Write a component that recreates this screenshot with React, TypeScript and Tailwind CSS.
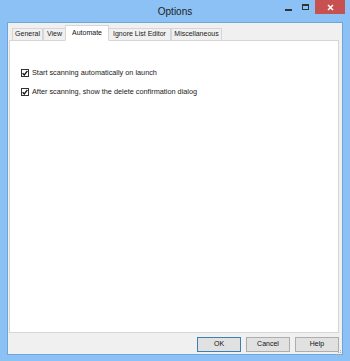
import React from "react";

const font = { fontFamily: '"Liberation Sans", Arial, sans-serif' };

function Check({ label }: { label: string }) {
  return (
    <div className="flex items-center gap-[3px] h-[9px]">
      <div className="w-[8px] h-[8px] border border-[#333] bg-white flex items-center justify-center">
        <svg width="6" height="6" viewBox="0 0 6 6">
          <path d="M0.6 3.2 L2.3 4.9 L5.4 0.9" fill="none" stroke="#111" strokeWidth="1.3" />
        </svg>
      </div>
      <span className="text-[7.3px] text-[#1a1a1a] leading-none">{label}</span>
    </div>
  );
}

function Tab({ label, active, w }: { label: string; active?: boolean; w: string }) {
  if (active) {
    return (
      <div
        className={`${w} h-[16px] -mb-px bg-white border border-[#d6d6d6] border-b-white flex items-center justify-center text-[7px] text-[#111] z-10 -mx-px`}
      >
        {label}
      </div>
    );
  }
  return (
    <div
      className={`${w} h-[12px] bg-[#f0f0f0] border border-[#d6d6d6] border-b-0 flex items-center justify-center text-[7px] text-[#1a1a1a]`}
    >
      {label}
    </div>
  );
}

function Btn({ label, primary }: { label: string; primary?: boolean }) {
  return (
    <div
      className={`w-[44px] h-[15px] flex items-center justify-center text-[7px] text-[#111] bg-[#e1e1e1] border ${
        primary ? "border-[#3c7fb1]" : "border-[#adadad]"
      }`}
    >
      {label}
    </div>
  );
}

export default function App() {
  return (
    <div className="w-[350px] h-[361px] bg-[#8cc1f5] flex flex-col" style={font}>
      <div className="h-[22px] relative flex items-center justify-center">
        <span className="text-[10px] text-[#222] mt-[1px]">Options</span>
        <div className="absolute right-[5px] top-0 flex items-start">
          <div className="w-[7px] h-[2px] bg-[#333] mt-[9px] mr-[10px]" />
          <div className="w-[7px] h-[6px] border border-[#333] border-t-2 mt-[4px] mr-[6px]" />
          <div className="w-[30px] h-[14px] bg-[#c75050] flex items-center justify-center">
            <svg width="7" height="7" viewBox="0 0 7 7">
              <path d="M1 1 L6 6 M6 1 L1 6" stroke="#fff" strokeWidth="1.5" />
            </svg>
          </div>
        </div>
      </div>
      <div className="mx-[7px] mb-[6px] flex-1 bg-[#f0f0f0] border border-[#6fa6d9] flex flex-col pl-[1px] pr-[3px]">
        <div className="flex items-end pl-[3px] pt-[2px] h-[17px]">
          <Tab label="General" w="w-[31px]" />
          <Tab label="View" w="w-[23px]" />
          <Tab label="Automate" active w="w-[44px]" />
          <Tab label="Ignore List Editor" w="w-[63px]" />
          <Tab label="Miscellaneous" w="w-[51px]" />
        </div>
        <div className="h-[293px] bg-white border border-[#d6d6d6] pt-[27px] pl-[11px] flex flex-col gap-[10px]">
          <Check label="Start scanning automatically on launch" />
          <Check label="After scanning, show the delete confirmation dialog" />
        </div>
        <div className="flex justify-end gap-[5px] mt-[4px] relative">
          <Btn label="OK" primary />
          <Btn label="Cancel" />
          <Btn label="Help" />
          <svg className="absolute right-[-3px] bottom-[-4px]" width="6" height="6" viewBox="0 0 6 6">
            <rect x="4" y="0" width="1" height="1" fill="#aaa" />
            <rect x="2" y="2" width="1" height="1" fill="#aaa" />
            <rect x="4" y="2" width="1" height="1" fill="#aaa" />
            <rect x="0" y="4" width="1" height="1" fill="#aaa" />
            <rect x="2" y="4" width="1" height="1" fill="#aaa" />
            <rect x="4" y="4" width="1" height="1" fill="#aaa" />
          </svg>
        </div>
      </div>
    </div>
  );
}
